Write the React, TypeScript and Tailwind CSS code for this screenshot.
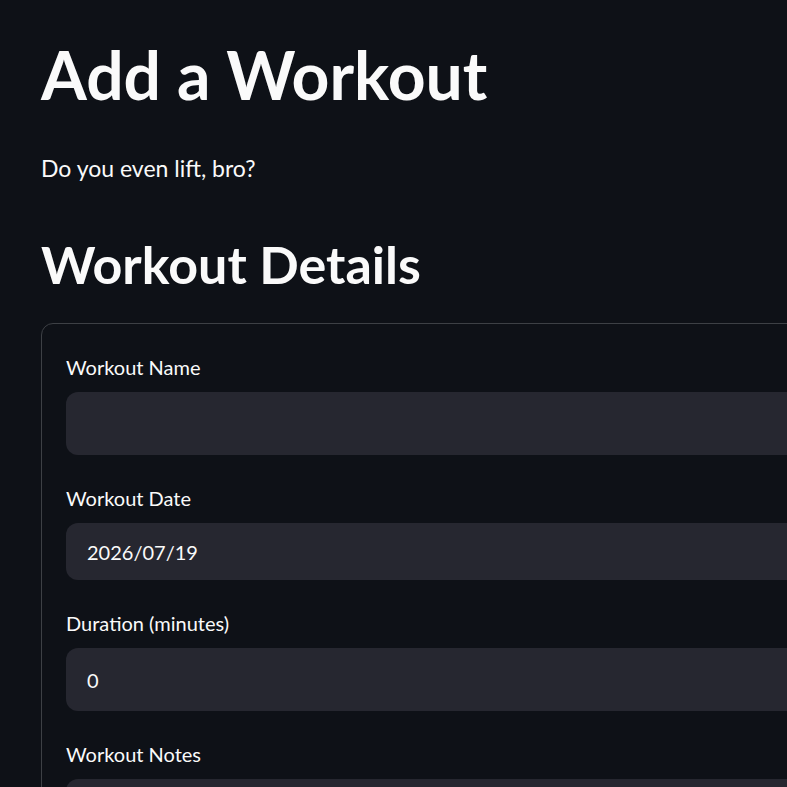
import React from "react";

const font = { fontFamily: "Lato, 'Noto Sans', sans-serif" };

const fields = [
	{ label: "Workout Name", value: "", tall: true },
	{ label: "Workout Date", value: "2026/07/19", tall: false },
	{ label: "Duration (minutes)", value: "0", tall: true },
];

export default function App() {
	return (
		<div
			className="h-[787px] w-[787px] overflow-hidden bg-[#0e1117] text-[#fafafa]"
			style={font}
		>
			<main className="w-[1100px] pl-[41px] pt-[35px]">
				<h1 className="text-[66px] font-bold leading-[80px]">
					Add a Workout
				</h1>
				<p className="mt-[35px] text-[23px] leading-[36px]">
					Do you even lift, bro?
				</p>
				<h2 className="mt-[46px] text-[52px] font-bold leading-[64px]">
					Workout Details
				</h2>
				<form className="mt-[27px] rounded-[12px] border border-[#3d4045] px-[24px] pt-[27px]">
					{fields.map(({ label, value, tall }) => (
						<div key={label} className="mb-[27px]">
							<label className="block text-[20px] leading-[32px]">
								{label}
							</label>
							<div
								className={`mt-[9px] flex items-center rounded-[12px] bg-[#262730] px-[21px] text-[20px] ${
									tall ? "h-[63px]" : "h-[57px]"
								}`}
							>
								{value}
							</div>
						</div>
					))}
					<label className="block text-[20px] leading-[32px]">
						Workout Notes
					</label>
					<div className="mt-[9px] h-[150px] rounded-[12px] bg-[#262730]" />
				</form>
			</main>
		</div>
	);
}
